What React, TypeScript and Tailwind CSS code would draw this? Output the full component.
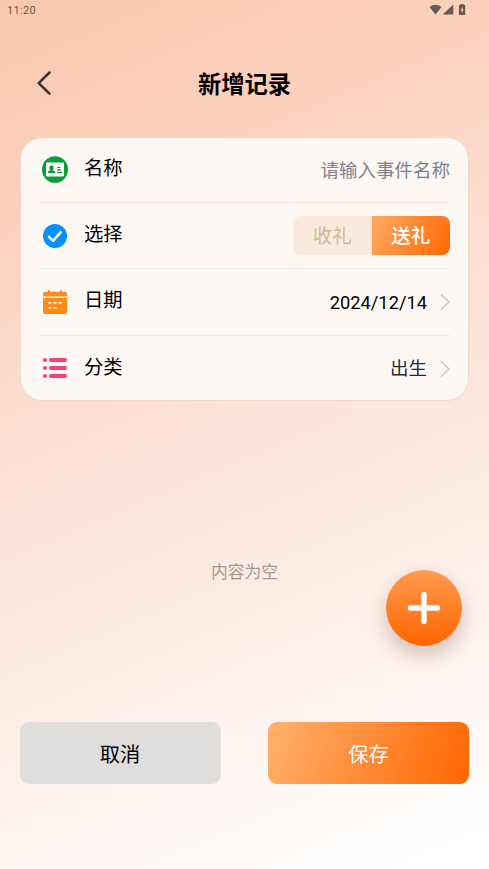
import { useState } from "react";
import type { ReactNode } from "react";

const TYPES = ["收礼", "送礼"];

function StatusBar() {
  return (
    <div className="flex h-5 items-center justify-between pl-[7px] pr-[22px] text-[#675a50]">
      <span className="pt-px font-['Roboto',sans-serif] text-[11px] leading-5 tracking-[0.3px]">11:20</span>
      <svg width="38" height="12" viewBox="0 0 38 12" fill="currentColor">
        <path d="M0.5 3Q6.5-1.6 12.5 3L6.5 10.5Z" />
        <path d="M24.3 0.4V10.6H13.8Z" />
        <path
          fillRule="evenodd"
          d="M31.3 0H34.7V1.1H36.2V10.9H29.9V1.1H31.3ZM33.6 3L31.5 6.4H32.8V9L34.7 5.6H33.6Z"
        />
      </svg>
    </div>
  );
}

function NameIcon() {
  return (
    <svg width="26" height="27" viewBox="0 0 26 27">
      <ellipse cx="13" cy="13.5" rx="13" ry="13.3" fill="#0a9e35" />
      <rect x="4" y="6.5" width="18" height="14" rx="1.3" fill="#fff" />
      <g fill="#0a9e35">
        <ellipse cx="9.5" cy="11.8" rx="2.2" ry="2.6" />
        <path d="M8.4 13h2.2v1.3l2.2.8q.5.3.5 1.9H5.8q0-1.6.5-1.9l2.1-.8Z" />
        <path d="M15 10.9h3.4v1.2H15zM15 13.3h4v1.2h-4zM15 15.7h5v1.2h-5z" />
      </g>
    </svg>
  );
}

function SelectIcon() {
  return (
    <svg width="24" height="24" viewBox="0 0 24 24">
      <circle cx="12" cy="12" r="12" fill="#0491ff" />
      <path
        d="M6 12.9L10.1 16.8L17.8 8.1"
        fill="none"
        stroke="#fff"
        strokeWidth="2.5"
        strokeLinecap="round"
        strokeLinejoin="round"
      />
    </svg>
  );
}

function DateIcon() {
  return (
    <svg width="24" height="24" viewBox="0 0 24 24" fill="#ff8b17">
      <path d="M5 1Q5 0 6 0T7 1V1.7H17V1Q17 0 18 0T19 1V1.7H22Q24 1.7 24 3.7V6.6H0V3.7Q0 1.7 2 1.7H5Z" />
      <path d="M0 8H24V22Q24 24 22 24H2Q0 24 0 22Z" />
      <path
        d="M5.2 12.8H8.6M10.4 12.8H13.7M15.5 12.8H18.8M5.2 17.8H8.6M10.4 17.8H13.7"
        stroke="#fff"
        strokeWidth="1.5"
      />
    </svg>
  );
}

function CategoryIcon() {
  return (
    <svg className="-mt-0.5" width="24" height="20" viewBox="0 0 24 20" fill="#f1437a">
      <circle cx="2" cy="2.1" r="2" />
      <circle cx="2" cy="10" r="2" />
      <circle cx="2" cy="17.9" r="2" />
      <rect x="6" y="0.1" width="18" height="4" rx="2" />
      <rect x="6" y="8" width="18" height="4" rx="2" />
      <rect x="6" y="15.9" width="18" height="4" rx="2" />
    </svg>
  );
}

function Chevron() {
  return (
    <svg className="-mr-px ml-3" width="12" height="18" viewBox="0 0 12 18" fill="none">
      <path d="M1.8 1.2L10 9L1.8 16.8" stroke="#c9c7c5" strokeWidth="1.5" />
    </svg>
  );
}

function Row({ icon, label, children }: { icon: ReactNode; label: string; children: ReactNode }) {
  return (
    <div className="flex h-[66.2px] items-center border-b border-[#f8e5db] last:border-b-0">
      <div className="flex w-[31px] justify-center">{icon}</div>
      <span className="-mt-px ml-3.5 text-[19.3px] leading-7 text-black">{label}</span>
      <div className="ml-auto flex items-center">{children}</div>
    </div>
  );
}

export default function App() {
  const [type, setType] = useState(1);

  return (
    <main className="flex h-[869px] w-[489px] flex-col overflow-hidden bg-[linear-gradient(157deg,#f9c8ae_0%,#fbd1bd_20%,#fde7dd_55%,#fef2ed_75%,#ffffff_97%)] font-['Roboto','Noto_Sans_CJK_SC',sans-serif]">
      <StatusBar />

      <header className="mt-[43px] grid h-10 grid-cols-[90px_1fr_90px] items-center">
        <button type="button" aria-label="返回" className="pl-[36px]">
          <svg width="16" height="26" viewBox="0 0 16 26" fill="none">
            <path
              d="M13.5 2.5L2.7 13.2L13.5 23.7"
              stroke="#333"
              strokeWidth="2.5"
              strokeLinecap="round"
              strokeLinejoin="round"
            />
          </svg>
        </button>
        <h1 className="pt-1 text-center text-[23.3px] font-bold leading-8 text-black">新增记录</h1>
      </header>

      {/* Form card */}
      <section className="mx-5 mt-[34px] h-[264px] rounded-[22px] border border-[#eed9cd] bg-[#fef8f4] px-[18px]">
        <div className="-mt-px">
          <Row icon={<NameIcon />} label="名称">
            <input
              placeholder="请输入事件名称"
              className="w-[180px] bg-transparent pt-0.5 text-right text-[18.5px] leading-7 outline-none placeholder:text-[#7c828d]"
            />
          </Row>
          <Row icon={<SelectIcon />} label="选择">
            <div className="flex h-[39px] w-[157px] overflow-hidden rounded-lg bg-[#f9eadd]">
              {TYPES.map((name, i) => (
                <button
                  key={name}
                  type="button"
                  onClick={() => setType(i)}
                  className={[
                    "flex-1 pt-px text-[19.5px]",
                    i === type
                      ? "bg-[linear-gradient(120deg,#ffab66,#ff6700)] font-medium text-white"
                      : "text-[#d2b698]",
                  ].join(" ")}
                >
                  {name}
                </button>
              ))}
            </div>
          </Row>
          <Row icon={<DateIcon />} label="日期">
            <span className="pt-px text-[18.3px] text-black">2024/12/14</span>
            <Chevron />
          </Row>
          <Row icon={<CategoryIcon />} label="分类">
            <span className="pt-[3px] text-[18.5px] text-[#1f2937]">出生</span>
            <Chevron />
          </Row>
        </div>
      </section>

      <p className="mt-[159px] text-center text-[16.8px] leading-6 text-[#a19995]">内容为空</p>

      {/* Floating add button */}
      <button
        type="button"
        aria-label="添加"
        className="-mt-[14px] mr-[27px] flex size-[76px] items-center justify-center self-end rounded-full bg-[linear-gradient(180deg,#ff9b4f,#ff6500)] shadow-[0_10px_20px_rgba(80,45,25,0.25)]"
      >
        <svg width="34" height="34" viewBox="0 0 34 34">
          <path d="M17 3.4V30.6M3.4 17H30.6" stroke="#fff" strokeWidth="5.4" strokeLinecap="round" />
        </svg>
      </button>

      <div className="mt-[76px] flex justify-between px-5">
        <button
          type="button"
          className="h-[62px] w-[201px] rounded-[9px] bg-[#dfdedc] pr-px pt-1 text-[20.3px] text-black"
        >
          取消
        </button>
        <button
          type="button"
          className="h-[62px] w-[201px] rounded-[9px] bg-[linear-gradient(110deg,#ffb26e,#ff6500)] pt-1 text-[20.3px] text-white"
        >
          保存
        </button>
      </div>
    </main>
  );
}
